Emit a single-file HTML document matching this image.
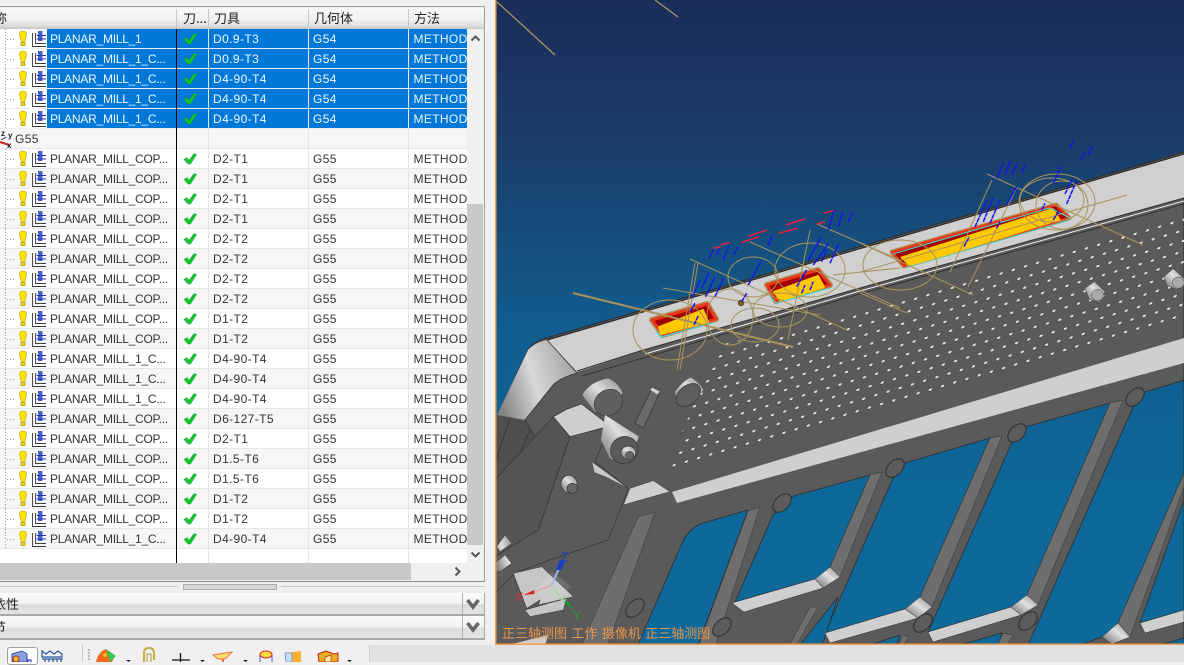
<!DOCTYPE html>
<html><head><meta charset="utf-8"><style>
*{box-sizing:border-box}
html,body{margin:0;padding:0;width:1184px;height:662px;overflow:hidden;background:#f0f0f0;font-family:"Liberation Sans","Noto Sans CJK SC",sans-serif}
.a{position:absolute}
#panel{position:absolute;left:-1px;top:6px;width:486px;height:576px;border:1px solid #a0a0a0;border-left:0;border-bottom:2px solid #8a8a8a;background:#f0f0f0}
#hd{position:absolute;left:0;top:8px;width:484px;height:21px;background:linear-gradient(#f9f9f9,#f0f0f0 55%,#dedede 85%,#c4c4c4);font:13px "Noto Sans CJK SC",sans-serif;color:#222}
#hd span{position:absolute;top:0;line-height:19px}
#hd i{position:absolute;top:1px;width:1px;height:19px;background:#c8c8c8}
.r{position:absolute;left:0;width:467px;height:20px;border-bottom:1px solid #e6e6e6;background:#fff;font-size:12px;line-height:19px;color:#333;overflow:hidden}
.r.g{background:#f6f6f6}
.r.s{background:linear-gradient(90deg,#fff 47px,#0078d7 47px);border-bottom:1px solid #e8eef4;color:#f2f8ff}
.r span{position:absolute;top:1px;white-space:nowrap}
.n{left:50px;letter-spacing:-.25px}.t{left:213px;letter-spacing:.4px}.m{left:313px;letter-spacing:.4px}.f{left:413.5px;letter-spacing:.35px}
.v{position:absolute;top:0;width:1px;height:534px;background:#e6e6e6}
.sec{position:absolute;left:0;width:485px;border-bottom:2px solid #a8a8a8;border-right:1px solid #a8a8a8;background:linear-gradient(#fbfbfb,#f2f2f2 50%,#dcdcdc 55%,#e4e4e4);font:13px "Noto Sans CJK SC",sans-serif;color:#222;overflow:hidden}
.sec em{position:absolute;left:462px;top:0;bottom:0;width:1px;background:#b0b0b0}
.sec svg{position:absolute;left:466px;top:5px}
</style></head><body>

<div id="panel"></div>
<div id="hd">
<span style="left:-19px">名称</span><i style="left:176px"></i>
<span style="left:183px">刀...</span><i style="left:208px"></i>
<span style="left:214px">刀具</span><i style="left:308px"></i>
<span style="left:314px">几何体</span><i style="left:408px"></i>
<span style="left:414px">方法</span>
</div>

<div class="a" style="left:0;top:29px;width:467px;height:534px;overflow:hidden;background:#fff">
<div class="r s" style="top:0"><span class="n">PLANAR_MILL_1</span><span class="t">D0.9-T3</span><span class="m">G54</span><span class="f">METHOD</span></div>
<div class="r s" style="top:20px"><span class="n">PLANAR_MILL_1_C...</span><span class="t">D0.9-T3</span><span class="m">G54</span><span class="f">METHOD</span></div>
<div class="r s" style="top:40px"><span class="n">PLANAR_MILL_1_C...</span><span class="t">D4-90-T4</span><span class="m">G54</span><span class="f">METHOD</span></div>
<div class="r s" style="top:60px"><span class="n">PLANAR_MILL_1_C...</span><span class="t">D4-90-T4</span><span class="m">G54</span><span class="f">METHOD</span></div>
<div class="r s" style="top:80px"><span class="n">PLANAR_MILL_1_C...</span><span class="t">D4-90-T4</span><span class="m">G54</span><span class="f">METHOD</span></div>
<div class="r g" style="top:100px"><span style="left:15px;letter-spacing:.4px">G55</span></div>
<div class="r" style="top:120px"><span class="n">PLANAR_MILL_COP...</span><span class="t">D2-T1</span><span class="m">G55</span><span class="f">METHOD</span></div>
<div class="r g" style="top:140px"><span class="n">PLANAR_MILL_COP...</span><span class="t">D2-T1</span><span class="m">G55</span><span class="f">METHOD</span></div>
<div class="r" style="top:160px"><span class="n">PLANAR_MILL_COP...</span><span class="t">D2-T1</span><span class="m">G55</span><span class="f">METHOD</span></div>
<div class="r g" style="top:180px"><span class="n">PLANAR_MILL_COP...</span><span class="t">D2-T1</span><span class="m">G55</span><span class="f">METHOD</span></div>
<div class="r" style="top:200px"><span class="n">PLANAR_MILL_COP...</span><span class="t">D2-T2</span><span class="m">G55</span><span class="f">METHOD</span></div>
<div class="r g" style="top:220px"><span class="n">PLANAR_MILL_COP...</span><span class="t">D2-T2</span><span class="m">G55</span><span class="f">METHOD</span></div>
<div class="r" style="top:240px"><span class="n">PLANAR_MILL_COP...</span><span class="t">D2-T2</span><span class="m">G55</span><span class="f">METHOD</span></div>
<div class="r g" style="top:260px"><span class="n">PLANAR_MILL_COP...</span><span class="t">D2-T2</span><span class="m">G55</span><span class="f">METHOD</span></div>
<div class="r" style="top:280px"><span class="n">PLANAR_MILL_COP...</span><span class="t">D1-T2</span><span class="m">G55</span><span class="f">METHOD</span></div>
<div class="r g" style="top:300px"><span class="n">PLANAR_MILL_COP...</span><span class="t">D1-T2</span><span class="m">G55</span><span class="f">METHOD</span></div>
<div class="r" style="top:320px"><span class="n">PLANAR_MILL_1_C...</span><span class="t">D4-90-T4</span><span class="m">G55</span><span class="f">METHOD</span></div>
<div class="r g" style="top:340px"><span class="n">PLANAR_MILL_1_C...</span><span class="t">D4-90-T4</span><span class="m">G55</span><span class="f">METHOD</span></div>
<div class="r" style="top:360px"><span class="n">PLANAR_MILL_1_C...</span><span class="t">D4-90-T4</span><span class="m">G55</span><span class="f">METHOD</span></div>
<div class="r g" style="top:380px"><span class="n">PLANAR_MILL_COP...</span><span class="t">D6-127-T5</span><span class="m">G55</span><span class="f">METHOD</span></div>
<div class="r" style="top:400px"><span class="n">PLANAR_MILL_COP...</span><span class="t">D2-T1</span><span class="m">G55</span><span class="f">METHOD</span></div>
<div class="r g" style="top:420px"><span class="n">PLANAR_MILL_COP...</span><span class="t">D1.5-T6</span><span class="m">G55</span><span class="f">METHOD</span></div>
<div class="r" style="top:440px"><span class="n">PLANAR_MILL_COP...</span><span class="t">D1.5-T6</span><span class="m">G55</span><span class="f">METHOD</span></div>
<div class="r g" style="top:460px"><span class="n">PLANAR_MILL_COP...</span><span class="t">D1-T2</span><span class="m">G55</span><span class="f">METHOD</span></div>
<div class="r" style="top:480px"><span class="n">PLANAR_MILL_COP...</span><span class="t">D1-T2</span><span class="m">G55</span><span class="f">METHOD</span></div>
<div class="r g" style="top:500px"><span class="n">PLANAR_MILL_1_C...</span><span class="t">D4-90-T4</span><span class="m">G55</span><span class="f">METHOD</span></div>
<div class="v" style="left:208px"></div><div class="v" style="left:308px"></div><div class="v" style="left:408px"></div>
<div class="v" style="left:176px;background:#000"></div>
<svg class="a" style="left:0;top:0" width="200" height="534">
<defs>
<g id="ic">
<path d="M5.500 0V20M7 10.500H16" fill="none" stroke="#9a9a9a" stroke-dasharray="1 2"/>
<path d="M19.500 5.500Q19.500 2 23 2 26.500 2 26.500 5.500L24.800 12.500H21.200Z" fill="#ffe600" stroke="#b89a00" stroke-width=".6"/>
<rect x="21" y="13.500" width="4" height="3" fill="#f0d800" stroke="#a08800" stroke-width=".6"/>
<path d="M32.500 4V17.500H46M35.500 4V14.500H46" fill="none" stroke="#3a3a3a" stroke-width=".9"/>
<rect x="38" y="2" width="4.500" height="10" fill="#4a60d0"/>
<path d="M36.500 6.500H46M36.500 10H46" stroke="#2838b8" stroke-width=".9"/>
<path d="M184 10.500L187 8.500 189 11.500 194 4.500 196.500 5.500 190.500 15H188Z" fill="#12c42e" stroke="#0a9a28" stroke-width=".5"/>
</g>
</defs>
<use href="#ic" y="0"/><use href="#ic" y="20"/><use href="#ic" y="40"/><use href="#ic" y="60"/><use href="#ic" y="80"/>
<use href="#ic" y="120"/><use href="#ic" y="140"/><use href="#ic" y="160"/><use href="#ic" y="180"/><use href="#ic" y="200"/><use href="#ic" y="220"/><use href="#ic" y="240"/><use href="#ic" y="260"/><use href="#ic" y="280"/><use href="#ic" y="300"/><use href="#ic" y="320"/><use href="#ic" y="340"/><use href="#ic" y="360"/><use href="#ic" y="380"/><use href="#ic" y="400"/><use href="#ic" y="420"/><use href="#ic" y="440"/><use href="#ic" y="460"/><use href="#ic" y="480"/><use href="#ic" y="500"/>
<path d="M1 111L6 108" stroke="#333"/>
<path d="M0 113L9 116" stroke="#d02020" stroke-width="2"/>
<text x="1" y="107" font-size="8" font-weight="bold" fill="#222">z</text>
<text x="8" y="109" font-size="8" font-weight="bold" fill="#222">y</text>
<text x="7" y="119" font-size="8" font-weight="bold" fill="#222">x</text>
</svg>
</div>

<!-- vertical scrollbar -->
<div class="a" style="left:467px;top:29px;width:17px;height:534px;background:#f0f0f0"></div>
<div class="a" style="left:467px;top:204px;width:16px;height:341px;background:#c8c8c8"></div>
<svg class="a" style="left:467px;top:30px" width="17" height="16"><path d="M4.500 10.500L8.500 6.500 12.500 10.500" fill="none" stroke="#555" stroke-width="2"/></svg>
<svg class="a" style="left:467px;top:547px" width="17" height="16"><path d="M4.500 5.500L8.500 9.500 12.500 5.500" fill="none" stroke="#555" stroke-width="2"/></svg>
<!-- horizontal scrollbar -->
<div class="a" style="left:0;top:563px;width:484px;height:18px;background:#f0f0f0"></div>
<div class="a" style="left:0;top:563px;width:411px;height:17px;background:#c8c8c8"></div>
<svg class="a" style="left:450px;top:563px" width="16" height="17"><path d="M5.500 4.500L9.500 8.500 5.500 12.500" fill="none" stroke="#555" stroke-width="2"/></svg>
<!-- splitter -->
<div class="a" style="left:0;top:586px;width:178px;height:1px;background:#c8c8c8"></div>
<div class="a" style="left:281px;top:586px;width:204px;height:1px;background:#c8c8c8"></div>
<div class="a" style="left:183px;top:584px;width:94px;height:6px;background:#d4d4d4;border:1px solid #b0b0b0"></div>
<!-- sections -->
<div class="sec" style="top:593px;height:23px"><span class="a" style="left:-20px;top:1px;line-height:20px;white-space:nowrap">相依性</span><em></em><svg width="14" height="12"><path d="M1.500 2L7 9 12.500 2" fill="none" stroke="#666" stroke-width="3.500"/></svg></div>
<div class="sec" style="top:616px;height:24px"><span class="a" style="left:-20px;top:1px;line-height:20px;white-space:nowrap">细节</span><em></em><svg width="14" height="12"><path d="M1.500 2L7 9 12.500 2" fill="none" stroke="#666" stroke-width="3.500"/></svg></div>

<!-- viewport -->
<svg class="a" style="left:495px;top:0" width="689" height="645" viewBox="495 0 689 645">
<defs>
<linearGradient id="bg" gradientUnits="userSpaceOnUse" x1="0" y1="0" x2="0" y2="644"><stop offset="0" stop-color="#1a2d5a"/><stop offset=".2" stop-color="#1c3b67"/><stop offset=".5" stop-color="#115c8e"/><stop offset=".75" stop-color="#0e6799"/><stop offset="1" stop-color="#0e6a9b"/></linearGradient>
<linearGradient id="cor" x1="0" y1=".6" x2="1" y2=".3"><stop offset="0" stop-color="#858585"/><stop offset=".45" stop-color="#d8d8d8"/><stop offset="1" stop-color="#a0a0a0"/></linearGradient>
<linearGradient id="cyl" x1="0" y1="1" x2="1" y2="0"><stop offset="0" stop-color="#666"/><stop offset=".55" stop-color="#e0e0e0"/><stop offset="1" stop-color="#888"/></linearGradient>
<pattern id="dots" patternUnits="userSpaceOnUse" x="-6.100" y="-6.250" width="12.200" height="12.500" patternTransform="matrix(1 -.295 -.52 1 798 433)"><g transform="matrix(1.180 .348 .614 1.180 0 0)"><ellipse rx="3" ry="2.500" transform="rotate(-25)" fill="#303030"/><ellipse cx=".4" cy=".3" rx="2.300" ry="1.800" transform="rotate(-25)" fill="#e6e6e6"/></g></pattern>
<clipPath id="vc"><rect x="496" y="0" width="688" height="644"/></clipPath>
</defs>
<rect x="495" y="0" width="689" height="645" fill="url(#bg)"/>
<g clip-path="url(#vc)">
<path d="M1184 152L547 338Q534 341 528 350L496 418V644H1184Z" fill="#5a5a5a" stroke="#2c2c2c"/>
<!-- top face -->
<path d="M1184 154L547 340 577 372 640 351 860 288 1184 198Z" fill="#d0d0d0"/>
<path d="M1184 154L547 340" stroke="#2a2a2a" stroke-width="1.200"/>
<path d="M1184 198L860 288 640 351 577 371" fill="none" stroke="#333" stroke-width="1"/>
<path d="M1184 204L860 294 650 356 582 376" fill="none" stroke="#2a2a2a" stroke-width=".8"/>
<path d="M1184 201L860 291 645 354" fill="none" stroke="#eee" stroke-width="1"/>
<!-- corner -->
<path d="M528 350Q534 343 547 340L577 373Q560 378 553 385L525 420 497 415Z" fill="url(#cor)"/>
<path d="M547 340L577 373M525 420L553 385Q560 378 577 373" fill="none" stroke="#333" stroke-width=".8"/>
<path d="M496 415L525 420 541 447 496 560Z" fill="#4f4f4f"/>
<path d="M525 420L541 447 496 560M510 418L496 460M530 430L496 510" fill="none" stroke="#333" stroke-width=".8"/>
<!-- perforations -->
<polygon points="662,478 720,345 873,308 1184,212 1184,322" fill="url(#dots)"/>
<!-- light band -->
<polygon points="672,492 1184,338 1184,363 677,503" fill="#cfcfcf"/>
<!-- windows -->
<g fill="url(#bg)" stroke="#2c2c2c" stroke-width=".8" stroke-linejoin="round">
<path d="M748 510L700 524Q688 530 682 543L638 645H698Z"/>
<path d="M790 497L870 475 830 567Q823 575 815 579L735 602 773 515Z"/>
<path d="M905 463L990 438 920 597Q913 606 905 609L825 633 893 478Z"/>
<path d="M1025 427L1110 403 1027 595Q1020 604 1011 607L928 632 1013 440Z"/>
<path d="M1145 392L1184 380V473L1118 623Q1110 633 1102 637L1080 645H1028L1133 407Z"/>
<path d="M1184 500L1140 623 1184 610Z"/>
<path d="M1160 645L1184 638V645Z"/>
<path d="M870 645L900 635 897 645Z"/>
<path d="M960 645L1002 633 998 645Z"/>
<path d="M825 637L838 597 800 645H822Z"/>
</g>
<!-- ribs -->
<g fill="#6e6e6e" stroke="#333" stroke-width=".5">
<polygon points="748,511 760,507 716,644 699,644"/>
<polygon points="870,475 882,472 840,577 830,567"/>
<polygon points="990,438 1002,436 932,607 920,597"/>
<polygon points="1110,403 1123,400 1038,605 1027,595"/>
<polygon points="1184,473 1184,487 1130,637 1118,623"/>
<polygon points="810,607 818,607 797,644 790,644"/>
<polygon points="638,517 655,512 608,644 582,644"/>
<polygon points="903,635 909,637 904,644 899,644"/>
<polygon points="1003,633 1013,635 1008,644 998,644"/>
</g>
<!-- strips & fillets -->
<g fill="#cfcfcf" stroke="#333" stroke-width=".5">
<polygon points="732,603 815,579 823,588 744,612"/>
<polygon points="825,633 905,609 918,618 830,643"/>
<polygon points="928,632 1011,607 1021,615 933,642"/>
<polygon points="1140,623 1184,610 1184,622 1145,633"/>
</g>
<g fill="url(#cyl)" stroke="#333" stroke-width=".5">
<polygon points="830,567 840,577 823,588 815,579"/>
<polygon points="920,597 932,607 918,618 905,609"/>
<polygon points="1027,595 1038,605 1021,615 1011,607"/>
<polygon points="1118,623 1130,637 1112,644 1102,637"/>
</g>
<!-- pad ellipses -->
<g fill="#5c5c5c" stroke="#2c2c2c" stroke-width="1">
<ellipse cx="782" cy="503" rx="11" ry="7" transform="rotate(-45 782 503)"/>
<ellipse cx="895" cy="468" rx="11" ry="7" transform="rotate(-45 895 468)"/>
<ellipse cx="1017" cy="433" rx="11" ry="7" transform="rotate(-45 1017 433)"/>
<ellipse cx="1135" cy="397" rx="11" ry="7" transform="rotate(-45 1135 397)"/>
<ellipse cx="635" cy="608" rx="11" ry="7" transform="rotate(-45 635 608)"/>
<ellipse cx="722" cy="627" rx="11" ry="7" transform="rotate(-45 722 627)"/>
<ellipse cx="923" cy="623" rx="11" ry="7" transform="rotate(-45 923 623)"/>
<ellipse cx="1028" cy="621" rx="11" ry="7" transform="rotate(-45 1028 621)"/>
</g>
<!-- block and left detail (zoom-6 coords) -->
<g transform="translate(495 340) scale(.3333)">
<path d="M225 290L345 258 300 365 400 445 340 600 150 665 60 700 0 760V600L130 570Z" fill="#5a5a5a" stroke="#333" stroke-width="2"/>
<path d="M175 230L225 290 130 570 0 650V420Z" fill="#555" stroke="#333" stroke-width="2"/>
<path d="M175 230L225 290 345 258 260 192 215 208Z" fill="#cfcfcf" stroke="#333" stroke-width="2"/>
<path d="M290 365L400 445 330 410 298 398Z" fill="#c8c8c8" stroke="#333" stroke-width="1.500"/>
<path d="M385 495L405 445 475 422 525 455Z" fill="#cfcfcf" stroke="#333" stroke-width="1.500"/>
<!-- cylinders -->
<path d="M262 165Q285 125 340 115 372 130 382 158L345 228 300 215Z" fill="url(#cyl)"/>
<ellipse cx="340" cy="188" rx="44" ry="38" transform="rotate(-35 340 188)" fill="#606060" stroke="#333" stroke-width="2"/>
<path d="M330 225L432 290 395 372 345 355 318 300Z" fill="url(#cyl)"/>
<ellipse cx="388" cy="330" rx="42" ry="40" fill="#5a5a5a" stroke="#333" stroke-width="2" transform="rotate(-35 388 330)"/>
<ellipse cx="400" cy="338" rx="22" ry="20" fill="url(#cyl)" stroke="#333" stroke-width="2"/>
<ellipse cx="404" cy="346" rx="13" ry="12" fill="#666" stroke="#333" stroke-width="1.500"/>
<path d="M540 155Q565 122 588 112 615 130 625 150L575 198 545 180Z" fill="url(#cyl)"/>
<ellipse cx="580" cy="165" rx="42" ry="28" fill="#5e5e5e" stroke="#333" stroke-width="2" transform="rotate(-40 580 165)"/>
<path d="M472 142L495 155 445 265 420 250Z" fill="#6a6a6a" stroke="#333" stroke-width="2"/>
<path d="M472 142L495 155 487 163 466 150Z" fill="#d0d0d0"/>
<ellipse cx="222" cy="432" rx="24" ry="26" fill="url(#cyl)" stroke="#333" stroke-width="2"/>
<ellipse cx="232" cy="445" rx="16" ry="15" fill="#666" stroke="#333" stroke-width="2"/>
<!-- lower left -->
<path d="M5 620L30 585 50 610 15 635ZM0 670L30 645 50 670 15 695H0Z" fill="url(#cyl)" stroke="#333" stroke-width="1.500"/>
<path d="M55 700L140 680 235 770 130 795 135 780 95 805Z" fill="#c6c6c6" stroke="#333" stroke-width="1.500"/>
<path d="M90 810L215 775 205 810 105 830Z" fill="#c6c6c6" stroke="#333" stroke-width="1.500"/>
<path d="M60 910L160 885 150 915 50 915Z" fill="#cfcfcf"/>
<path d="M170 695L230 740 165 800 120 750Z" fill="#fff" opacity=".12" stroke="#aaa" stroke-width="1.500"/>
<path d="M170 735L190 690" stroke="#9fb8e8" stroke-width="6"/>
<path d="M183 690L198 690 210 665 195 660Z" fill="#1a3cc8"/>
<path d="M170 735L120 755" stroke="#d8a8a8" stroke-width="5"/>
<path d="M118 750L85 765 118 762Z" fill="#e02020"/>
<path d="M170 735L205 785" stroke="#a8d8a8" stroke-width="5"/>
<path d="M205 785L235 810 220 785Z" fill="#1a9a30"/>
<text x="197" y="664" font-size="39" fill="#1a3cc8" font-family="Liberation Sans, sans-serif">Z</text>
<text x="60" y="785" font-size="39" fill="#d83030" font-family="Liberation Sans, sans-serif">X</text>
<text x="232" y="838" font-size="39" fill="#2a9a3a" font-family="Liberation Sans, sans-serif">Y</text>
</g>
<!-- bolts -->
<g transform="translate(860 120) scale(.3333)">
<path d="M675 505L703 485 735 515 718 546 688 538Z" fill="url(#cyl)" stroke="#444" stroke-width="1.500"/>
<ellipse cx="713" cy="525" rx="18" ry="17" fill="#aaa" stroke="#444" stroke-width="1.500"/>
<path d="M912 470L940 446 974 478 952 508 922 497Z" fill="url(#cyl)" stroke="#444" stroke-width="1.500"/>
<ellipse cx="955" cy="488" rx="18" ry="17" fill="#aaa" stroke="#444" stroke-width="1.500"/>
</g>
<!-- pockets -->
<g stroke-linejoin="round">
<polygon points="652,320 707,304 716,319 663,335" fill="#a00000" stroke="#b09060" stroke-width="6"/>
<polygon points="652,320 707,304 716,319 663,335" fill="#a00000" stroke="#e83818" stroke-width="3"/>
<polygon points="659,327 703,310 708,322 661,334" fill="#ffc800" stroke="#ffc800" stroke-width="2"/>
<path d="M656 331L661 337 712 323" fill="none" stroke="#40d8d8" stroke-width="1.200"/>
<polygon points="767,285 818,270 830,285 776,301" fill="#a00000" stroke="#b09060" stroke-width="6"/>
<polygon points="767,285 818,270 830,285 776,301" fill="#a00000" stroke="#e83818" stroke-width="3"/>
<polygon points="774,292 818,276 824,287 781,301" fill="#ffc800" stroke="#ffc800" stroke-width="2"/>
<path d="M770 296L776 303 830 288" fill="none" stroke="#40d8d8" stroke-width="1"/>
<polygon points="892,252 1056,205 1069,218 904,266" fill="#a00000" stroke="#b09060" stroke-width="5"/>
<polygon points="892,252 1056,205 1069,218 904,266" fill="#a00000" stroke="#e83818" stroke-width="2.500"/>
<polygon points="900,257 1053,208 1061,220 910,267" fill="#ffc800"/>
<path d="M893 254L1050 208 1070 218" fill="none" stroke="#40e0e0" stroke-width="1"/>
<path d="M905 268L1070 220" fill="none" stroke="#40c8c8" stroke-width=".8"/>
</g>
<!-- toolpaths -->
<g fill="none" stroke="#a8935c" stroke-width="1">
<path d="M497 2L555 55M655 0L678 17" stroke-width="1.300"/>
<path d="M573 293L793 347" stroke-width="2"/>
<path d="M690 259L847 330M663 288L820 315M750 242L900 308M817 224L900 260M695 263L677 370M698 263L680 370M810 230L788 340M833 275L900 268M987 174L1143 245M860 243L973 295M860 272L1127 195M992 180L950 272M1017 187L968 287M860 293L907 313"/>
<ellipse cx="670" cy="330" rx="37" ry="30"/>
<ellipse cx="753" cy="277" rx="25" ry="20"/>
<ellipse cx="810" cy="270" rx="35" ry="27"/>
<ellipse cx="730" cy="317" rx="23" ry="28"/>
<ellipse cx="780" cy="310" rx="27" ry="17"/>
<ellipse cx="755" cy="325" rx="24" ry="17"/>
<ellipse cx="900" cy="265" rx="37" ry="25"/>
<ellipse cx="1057" cy="202" rx="38" ry="28"/>
<ellipse cx="1052" cy="200" rx="32" ry="22"/>
<ellipse cx="1062" cy="205" rx="26" ry="24"/>
</g>
<circle cx="741" cy="303" r="3" fill="#7a5a20" stroke="#333" stroke-width=".5"/>
<!-- blue dashes -->
<g transform="translate(560 130) scale(.3333)" stroke="#1414f0" stroke-width="4.500" stroke-dasharray="14 2" fill="none">
<path d="M447 385L462 355M490 390L507 345M470 375L480 355M520 375L535 350M625 345L638 315M565 465L605 390M425 475L447 428M437 500L465 440M465 500L490 445M395 505L420 450M390 545L405 520M402 585L415 557M545 515L560 490M710 470L740 420M725 490L735 465M750 480L760 455M745 390L785 320M760 405L805 340M785 395L800 360M810 400L837 340M835 290L848 245M865 275L880 245M805 300L822 240"/>
</g>
<g transform="translate(560 130) scale(.3333)" stroke="#e8203c" stroke-width="4.500" fill="none">
<path d="M460 355L482 350M482 345L508 337M545 337L598 320M565 318L622 300M655 310L712 295M678 285L735 266M770 282L795 275M790 250L820 242"/>
</g>
<g transform="translate(860 120) scale(.3333)" stroke="#1414f0" stroke-width="4.500" stroke-dasharray="14 2" fill="none">
<path d="M630 85L640 62M662 120L675 95M685 105L698 75M580 190L603 140M615 222L638 175M620 252L650 182M410 175L430 128M435 165L452 122M455 163L472 130M487 157L497 135M345 320L382 240M370 305L400 232M390 310L420 240M440 255L470 200M312 380L328 350M410 325L420 305M580 300L595 275M545 270L555 250"/>
</g>
<text x="502" y="638" font-size="13" fill="#e8964a" font-family="Noto Sans CJK SC, sans-serif" word-spacing="1.500">正三轴测图 工作 摄像机 正三轴测图</text>
</g>
<rect x="495" y="0" width="1.500" height="645" fill="#f0a050"/>
<rect x="495" y="643.500" width="689" height="1.500" fill="#f0a050"/>
</svg>

<!-- toolbar -->
<div class="a" style="left:0;top:645px;width:1184px;height:17px;background:#e2e2e2"></div>
<div class="a" style="left:0;top:645px;width:369px;height:17px;background:#f0f0f0"></div>
<div class="a" style="left:369px;top:645px;width:1px;height:17px;background:#cfcfcf"></div>
<div class="a" style="left:82px;top:645px;width:1px;height:17px;background:#c8c8c8"></div>
<div class="a" style="left:7px;top:647px;width:31px;height:18px;background:#fff;border:1px solid #a0a0a0;border-radius:3px"></div>
<svg class="a" style="left:0;top:645px" width="369" height="17" viewBox="0 645 369 17">
<path d="M12 654L22 651 27 654V662H12Z" fill="#8aa0e0" stroke="#3050a0"/>
<circle cx="16" cy="659" r="3" fill="#e8c020" stroke="#c02020"/>
<rect x="28" y="660" width="3" height="3" fill="none" stroke="#2020c0"/>
<path d="M42 651L46 654 50 651 54 654 58 651 62 654V657H42ZM42 659H63M45 659V662M49 659V662M53 659V662M57 659V662M61 659V662" fill="none" stroke="#2858a0" stroke-width="1.200"/>
<path d="M88 650H90M88 653H90M88 656H90M88 659H90" stroke="#bbb" stroke-width="2"/>
<path d="M96 662Q98 652 106 649 111 652 115 656L112 662Z" fill="#f06820"/>
<path d="M106 649L116 656 110 662Z" fill="#30c850"/>
<circle cx="105" cy="655" r="2" fill="#e8c020"/>
<path d="M126 660H131L128.500 662Z" fill="#222"/>
<path d="M144 662V653Q144 648 149 648 154 648 154 653V660" fill="none" stroke="#c0b040" stroke-width="2"/>
<path d="M147 662V654H151V662" fill="none" stroke="#a89830"/>
<path d="M172 660H190M180.500 653V662" stroke="#111" stroke-width="1.300"/>
<path d="M200 660H205L202.500 662Z" fill="#222"/>
<path d="M213 655L232 652 225 659 218 659Z" fill="#ffe070" stroke="#e87040"/>
<path d="M223 659V662" stroke="#e87040" stroke-width="2"/>
<path d="M243 660H248L245.500 662Z" fill="#222"/>
<path d="M260 654V662M272 654V662" stroke="#5050d0"/>
<ellipse cx="266" cy="654.500" rx="6" ry="3.500" fill="#ffe040" stroke="#e02020"/>
<path d="M285 653L301 651V662H286Z" fill="#ffb030"/>
<path d="M285 653L292 653V662H286Z" fill="#c8dcf8" stroke="#7090d0" stroke-width=".8"/>
<path d="M318 654L326 651 334 654 338 653V662H319Z" fill="#e8b020" stroke="#c02020"/>
<path d="M325 657L331 655V662H325Z" fill="#fff0a0" stroke="#c02020" stroke-width=".7"/>
<path d="M347 660H352L349.500 662Z" fill="#222"/>
</svg>
</body></html>
